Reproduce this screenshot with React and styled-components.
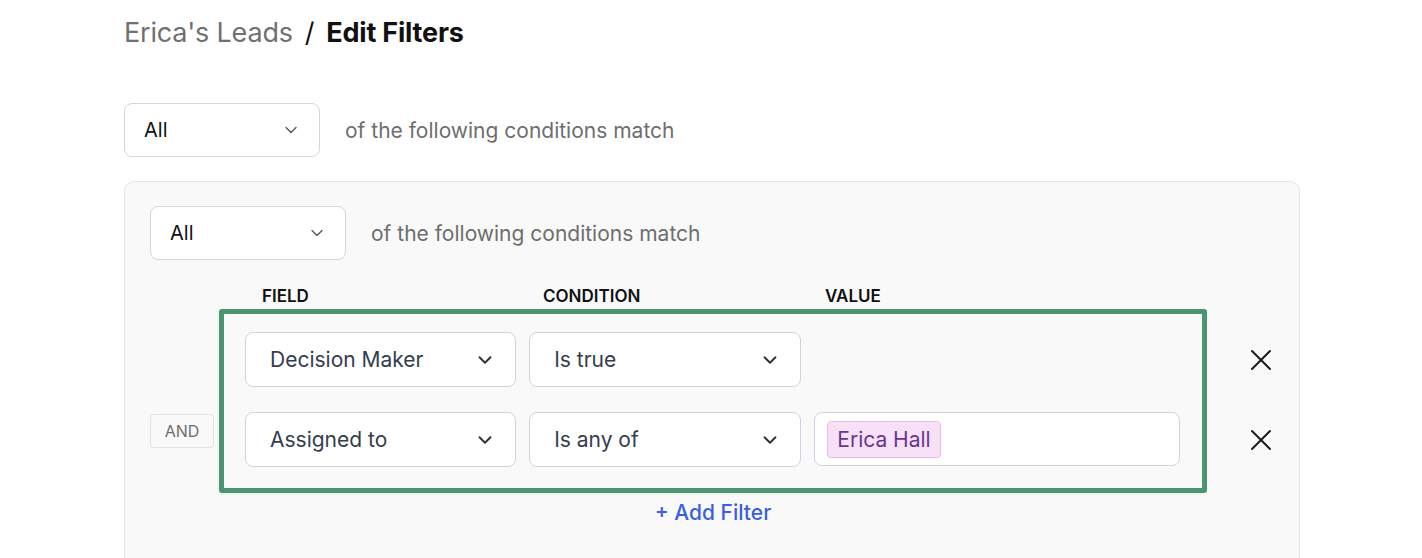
import React from 'react'
import styled, { createGlobalStyle } from 'styled-components'
import { ChevronDown, X } from 'lucide-react'

const GlobalStyle = createGlobalStyle`
  body {
    margin: 0;
    background: #ffffff;
    font-family: Inter, "Noto Sans", sans-serif;
  }
`

const rows = [
  { field: 'Decision Maker', condition: 'Is true', value: null },
  { field: 'Assigned to', condition: 'Is any of', value: ['Erica Hall'] },
]

const App = () => {
  return (
    <Page>
      <GlobalStyle />
      <Breadcrumb>
        <Crumb>Erica's Leads</Crumb>
        <Slash>/</Slash>
        <Current>Edit Filters</Current>
      </Breadcrumb>

      <TopMatch>
        <MatchSelect>
          <span>All</span>
          <ChevronDown size={20} strokeWidth={1.6} color="#555" />
        </MatchSelect>
        <MatchText>of the following conditions match</MatchText>
      </TopMatch>

      <Panel>
        <MatchRow>
          <MatchSelect>
            <span>All</span>
            <ChevronDown size={20} strokeWidth={1.6} color="#555" />
          </MatchSelect>
          <MatchText>of the following conditions match</MatchText>
        </MatchRow>

        <FilterGrid>
          <div />
          <Labels>
            <Label $width={284} $offset={17}>Field</Label>
            <Label $width={285} $offset={14}>Condition</Label>
            <Label $offset={11}>Value</Label>
          </Labels>
          <div />

          <AndColumn>
            <AndBadge>AND</AndBadge>
          </AndColumn>

          <Highlight>
            {rows.map((row) => (
              <FilterRow key={row.field}>
                <FieldSelect $width={272}>
                  <span>{row.field}</span>
                  <ChevronDown size={22} strokeWidth={2} color="#2b2f36" />
                </FieldSelect>
                <FieldSelect $width={273}>
                  <span>{row.condition}</span>
                  <ChevronDown size={22} strokeWidth={2} color="#2b2f36" />
                </FieldSelect>
                {row.value ? (
                  <ValueInput>
                    {row.value.map((v) => (
                      <Tag key={v}>{v}</Tag>
                    ))}
                  </ValueInput>
                ) : (
                  <EmptyValue />
                )}
              </FilterRow>
            ))}
          </Highlight>

          <RemoveColumn>
            {rows.map((row) => (
              <RemoveButton key={row.field}>
                <X size={36} strokeWidth={1.35} color="#1a1a1a" />
              </RemoveButton>
            ))}
          </RemoveColumn>

          <div />
          <AddFilter>+ Add Filter</AddFilter>
          <div />
        </FilterGrid>
      </Panel>
    </Page>
  )
}

const Page = styled.div`
  padding: 16px 0 0 124px;
  width: 1176px;
`
const Breadcrumb = styled.div`
  display: flex;
  align-items: center;
  gap: 12px;
  font-size: 27px;
  line-height: 34px;
  letter-spacing: -0.2px;
`
const Crumb = styled.span`
  color: #707070;
`
const Slash = styled.span`
  color: #111;
  font-weight: 400;
`
const Current = styled.span`
  color: #111;
  font-weight: 700;
`
const MatchRow = styled.div`
  display: flex;
  align-items: center;
  gap: 25px;
`
const TopMatch = styled(MatchRow)`
  margin-top: 53px;
`
const MatchSelect = styled.div`
  box-sizing: border-box;
  width: 196px;
  height: 54px;
  padding: 0 18px 0 19px;
  display: flex;
  align-items: center;
  justify-content: space-between;
  background: #fff;
  border: 1px solid #d6d6d6;
  border-radius: 8px;
  font-size: 20px;
  color: #111;
`
const MatchText = styled.span`
  font-size: 21px;
  color: #6e6e6e;
`
const Panel = styled.div`
  box-sizing: border-box;
  margin-top: 24px;
  width: 1176px;
  height: 400px;
  padding: 24px 30px 0 25px;
  background: #f9f9f9;
  border: 1px solid #e4e4e4;
  border-radius: 10px;

  ${MatchRow} {
    margin-bottom: 26px;
  }
`
const FilterGrid = styled.div`
  display: grid;
  grid-template-columns: 69px 988px 63px;
  row-gap: 3px;
`
const Labels = styled.div`
  display: flex;
  padding-left: 26px;
`
const Label = styled.div`
  width: ${({ $width }) => ($width ? `${$width}px` : 'auto')};
  padding-left: ${({ $offset }) => $offset}px;
  box-sizing: border-box;
  font-size: 17px;
  line-height: 20px;
  font-weight: 600;
  text-transform: uppercase;
  color: #111;
`
const AndColumn = styled.div`
  display: flex;
  flex-direction: column;
  justify-content: flex-end;
  padding-bottom: 45px;
`
const AndBadge = styled.div`
  box-sizing: border-box;
  width: 64px;
  height: 34px;
  display: flex;
  align-items: center;
  justify-content: center;
  border: 1px solid #e2e2e2;
  border-radius: 4px;
  background: #f9f9f9;
  font-size: 16px;
  color: #6e6e6e;
`
const Highlight = styled.div`
  box-sizing: border-box;
  display: flex;
  flex-direction: column;
  gap: 25px;
  padding: 18px 22px 21px 21px;
  border: 5px solid #4a9474;
  border-radius: 3px;
  box-shadow: 0 1px 4px rgba(0, 0, 0, 0.06);
`
const FilterRow = styled.div`
  display: flex;
  gap: 13px;
  height: 55px;
`
const FieldSelect = styled.div`
  box-sizing: border-box;
  width: ${({ $width }) => $width}px;
  height: 55px;
  padding: 0 19px 0 24px;
  display: flex;
  align-items: center;
  justify-content: space-between;
  background: #fff;
  border: 1px solid #cdd5e0;
  border-radius: 8px;
  font-size: 21px;
  color: #333d4f;
`
const ValueInput = styled.div`
  box-sizing: border-box;
  width: 367px;
  height: 54px;
  padding: 0 12px;
  display: flex;
  align-items: center;
  background: #fff;
  border: 1px solid #cdd5e0;
  border-radius: 8px;
`
const EmptyValue = styled.div`
  width: 367px;
`
const Tag = styled.span`
  box-sizing: border-box;
  height: 37px;
  padding: 0 9px;
  display: flex;
  align-items: center;
  background: #f7e1f6;
  border: 1px solid #eebbeb;
  border-radius: 4px;
  font-size: 21px;
  color: #6a3493;
`
const RemoveColumn = styled.div`
  display: flex;
  flex-direction: column;
  align-items: flex-end;
  gap: 25px;
  padding-top: 23px;
`
const RemoveButton = styled.div`
  width: 36px;
  height: 55px;
  display: flex;
  align-items: center;
  justify-content: center;
  margin-right: -9px;
`
const AddFilter = styled.div`
  margin-top: 3px;
  text-align: center;
  font-size: 21px;
  line-height: 28px;
  font-weight: 500;
  color: #3a5fe3;
`

export default App
